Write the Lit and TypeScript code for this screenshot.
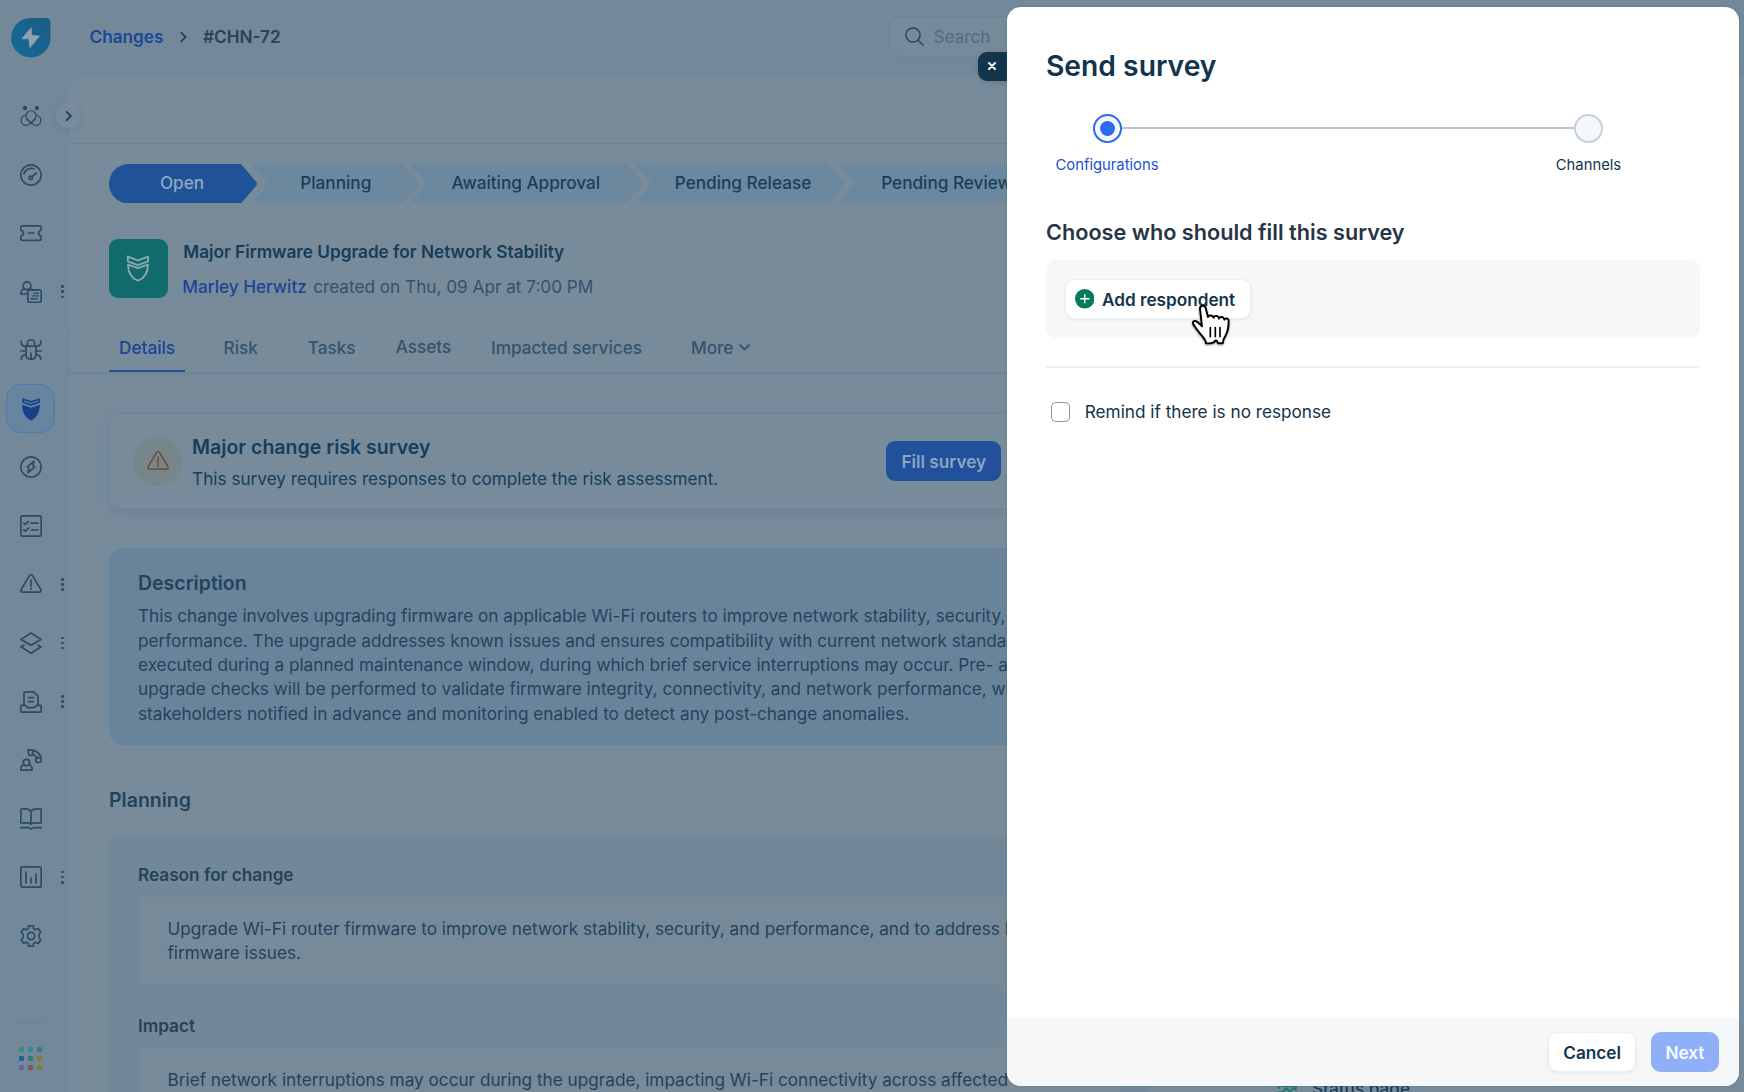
import { LitElement, html, css, svg, nothing } from "lit";
import { customElement } from "lit/decorators.js";
import { classMap } from "lit/directives/class-map.js";

const shield = svg`<path d="M3 2.6 L11 5.6 L19 2.6 V6.4 L11 9.3 L3 6.4 Z"/><path d="M3.2 9 L11 11.7 L18.8 9 C18.8 15 16 19.6 11 21.6 C6 19.6 3.2 15 3.2 9 Z"/>`;

const icons: Record<string, unknown> = {
  freddy: svg`<g stroke-width="1.3"><circle cx="5" cy="3" r="1.5" fill="currentColor"/><circle cx="16.9" cy="3" r="1.5" fill="currentColor"/>
    <path d="M11 18.3 L7.2 14.2 A5 5 0 1 1 14.8 14.2 Z"/>
    <path d="M6.3 10.2 C3 10.2 1.2 12.8 1.2 15.4 C1.2 18.4 3.4 20.4 6 20.4 C8 20.4 9.4 19.6 11 17.9 L14.8 14.2"/>
    <path d="M15.7 10.2 C19 10.2 20.8 12.8 20.8 15.4 C20.8 18.4 18.6 20.4 16 20.4 C14 20.4 12.6 19.6 11 17.9 L7.2 14.2"/></g>`,
  gauge: svg`<circle cx="11" cy="11" r="10.2"/><path d="M4 9.8 C5 5.8 9.5 3.2 14 4.8"/><circle cx="10.8" cy="13.8" r="1.7"/><path d="M12 12.6 L16.4 9"/>`,
  ticket: svg`<path d="M2.6 3.8 H19.4 Q21.2 3.8 21.2 5.4 V8 Q18.6 9 18.6 11 Q18.6 13.4 21.2 14.2 V16.8 Q21.2 18.4 19.4 18.4 H2.6 Q.8 18.4 .8 16.8 V14.2 Q3.4 13.4 3.4 11 Q3.4 9 .8 8 V5.4 Q.8 3.8 2.6 3.8 Z"/><path d="M8.2 11 H13.8"/>`,
  request: svg`<circle cx="7" cy="4.8" r="3.9"/><path d="M4.2 7.8 Q.8 9 .8 13 H7.4 M9.6 7.6 Q12.4 8.6 12.8 9.2"/><rect x="7.8" y="8.8" width="13.4" height="12.6" rx="2"/><path d="M14 12.2 H18.2 M12.6 14.9 H18.2 M11 17.7 H17.4" stroke-width="1.4"/>`,
  bug: svg`<path d="M7.4 7.2 V4.2 Q7.4 1 11 1 Q14.6 1 14.6 4.2 V7.2"/><path d="M6 7.2 H16 V15 Q16 20.4 11 20.4 Q6 20.4 6 15 Z M11 14 V20"/><path d="M1.2 2 V3.6 Q1.4 6.8 6 7.6 M20.8 2 V3.6 Q20.6 6.8 16 7.6 M.6 12 H6 M16 12 H21.4 M6.2 15.6 Q1.4 16 1.2 20.2 M15.8 15.6 Q20.6 16 20.8 20.2"/>`,
  release: svg`<circle cx="11" cy="11" r="10.2"/><path d="M13.9 5.4 L7.2 10.8 L9 12.2 L8 16.6 L14.8 11.2 L13 9.8 Z"/>`,
  tasks: svg`<rect x=".8" y=".8" width="20.4" height="20.4" rx="1.8"/><path d="M3.8 8.2 L5.4 9.4 L8.6 6.4 M3.8 15 L5.4 16.2 L8.6 13.2 M11.2 8.2 H18 M11.2 15 H18"/>`,
  alert: svg`<path d="M9.6 2.4 Q11 .6 12.4 2.4 L20.9 16.6 Q21.6 18.8 19.6 19.2 H2.4 Q.4 18.8 1.1 16.6 Z"/><path d="M11 7 V13 M11 15 V16.2"/>`,
  layers: svg`<path d="M11 1 L21 7.4 L11 13.2 L1 7.4 Z"/><path d="M4 13.2 L1 14.8 L11 21.2 L21 14.8 L18 13.2"/>`,
  inbox: svg`<path d="M4 14 V3 Q4 .8 6 .8 H13.6 L18 5 V14"/><path d="M.8 15.6 Q.8 14.4 2 14.4 H5.4 L7.6 16.6 H14.4 L16.6 14.4 H20 Q21.2 14.4 21.2 15.6 V20 Q21.2 21.2 20 21.2 H2 Q.8 21.2 .8 20 Z"/><path d="M8.4 6.6 H13.4 M8.4 10.6 H13.4"/>`,
  agent: svg`<circle cx="6.4" cy="13.6" r="3.2"/><path d="M3.4 16 Q.8 17 .8 19 V21.2 H12 V19 Q12 17 9.4 16"/><path d="M8 .8 Q18.6 .4 21.2 9 V13 L16.4 13.4 L15.6 9.4 L17.6 8.4 L12.8 5.4 L12.4 6.4 H9 Z M12.6 1 V5 M16 9.2 L21 8.8"/>`,
  book: svg`<path d="M11 3 Q8.6 .8 5.6 .8 H2.4 Q.8 .8 .8 2.4 V14.8 H7.6 Q10 14.8 11 16.4 Q12 14.8 14.4 14.8 H21.2 V2.4 Q21.2 .8 19.6 .8 H16.4 Q13.4 .8 11 3 Z V16"/><path d="M.4 19.6 H9 L11 21 L13 19.6 H21.6"/>`,
  chart: svg`<rect x=".8" y=".8" width="20.4" height="20.4" rx="2"/><path d="M6 6 V17 M11 12 V17 M16 8 V17"/>`,
  gear: svg`<circle cx="11" cy="11" r="3.6"/><path d="M8.6 .8 H13.4 V3.4 L15.6 4.8 L18.2 3.6 L20.9 7.4 L19.2 9 Q18.6 11 19.2 13 L20.9 14.6 L18.2 18.4 L15.6 17.2 L13.4 18.6 V21.2 H8.6 V18.6 L6.4 17.2 L3.8 18.4 L1.1 14.6 L2.8 13 Q3.4 11 2.8 9 L1.1 7.4 L3.8 3.6 L6.4 4.8 L8.6 3.4 Z"/>`,
};

const navRows: { icon: string; more?: boolean; active?: boolean }[] = [
  { icon: "freddy" }, { icon: "gauge" }, { icon: "ticket" }, { icon: "request", more: true }, { icon: "bug" },
  { icon: "change", active: true }, { icon: "release" }, { icon: "tasks" }, { icon: "alert", more: true },
  { icon: "layers", more: true }, { icon: "inbox", more: true }, { icon: "agent" }, { icon: "book" },
  { icon: "chart", more: true }, { icon: "gear" },
];

const appColours = ["#3a8b86", "#2f8aa8", "#3c7f6c", "#275f95", "#2a8070", "#827a3c", "#65649a", "#84525f", "#827a3c"];

@customElement("side-rail")
class SideRail extends LitElement {
  static styles = css`
    :host { display: flex; flex-direction: column; width: 70px; height: 1092px; color: #2b4c66; box-sizing: border-box; padding-top: 18px; flex: none; }
    .logo { width: 39.5px; height: 39.5px; margin-left: 11.3px; display: block; }
    nav { margin-top: 29.2px; display: flex; flex-direction: column; }
    .row { height: 58.57px; display: flex; align-items: center; padding-left: 6.4px; }
    .tile { width: 48.8px; height: 48.8px; border-radius: 15px; display: grid; place-items: center; box-sizing: border-box; border: 1.3px solid transparent; }
    .active .tile { background: #6784a0; border-color: #487cae; }
    svg { display: block; fill: none; stroke: currentColor; stroke-width: 1.7; stroke-linejoin: round; stroke-linecap: round; }
    .solid { color: #153f8a; }
    .more { display: flex; flex-direction: column; gap: 2.7px; margin-left: 6px; }
    .more i { width: 2.4px; height: 2.4px; border-radius: 50%; background: #2b4c66; }
    hr { border: 0; height: 1px; background: #6c8394; width: 29px; margin: 56.5px 0 0 16px; }
    .apps { display: grid; grid-template-columns: repeat(3, 5px); gap: 4.4px; margin: 24px 0 0 18.5px; }
    .apps i { width: 5px; height: 5px; border-radius: 1px; background: var(--c); }
  `;
  render() {
    return html`
      <svg class="logo" viewBox="0 0 39.5 39.5"><defs><linearGradient id="g" x1="0" y1="1" x2="1" y2="0"><stop offset="0" stop-color="#156a99"/><stop offset="1" stop-color="#1c5b86"/></linearGradient></defs>
        <path d="M19.7 0 H35 Q39.5 0 39.5 4.5 V19.7 A19.7 19.7 0 1 1 19.7 0 Z" fill="url(#g)" stroke="none"/>
        <path d="M20.2 9.8 L10.6 20.8 H17.8 L19 29.6 L28.6 18 L20.8 17.2 Z" fill="#8da3b4" stroke="#8da3b4" stroke-width=".6"/></svg>
      <nav>
        ${navRows.map((r) => html`<div class=${classMap({ row: true, active: !!r.active })}>
          <div class="tile">${r.icon === "change"
            ? html`<svg class="solid" width="22" height="24" viewBox="0 0 22 24"><path d="M3 2.2 L11 4.9 L19 2.2 V5.2 L11 7.9 L3 5.2 Z"/><path d="M2.2 7.8 L11 10.8 L19.8 7.8 C19.8 15 17 20.6 11 23.4 C5 20.6 2.2 15 2.2 7.8 Z" fill="currentColor" stroke="none"/></svg>`
            : html`<svg width="22" height="22" viewBox="0 0 22 22">${icons[r.icon]}</svg>`}</div>
          ${r.more ? html`<div class="more"><i></i><i></i><i></i></div>` : nothing}
        </div>`)}
      </nav>
      <hr />
      <div class="apps">${appColours.map((c) => html`<i style="--c:${c}"></i>`)}</div>
    `;
  }
}

@customElement("change-page")
class ChangePage extends LitElement {
  static styles = css`
    :host { display: flex; flex-direction: column; flex: 1; min-width: 0; height: 1092px; }
    svg { display: block; fill: none; stroke: currentColor; stroke-linejoin: round; stroke-linecap: round; flex: none; }
    .top { height: 75.5px; flex: none; display: flex; align-items: flex-start; }
    .crumbs { display: flex; align-items: center; height: 73px; padding-left: 19.5px; width: 799.5px; font-weight: 570; color: #25435b; }
    .crumbs .link { color: #1b469a; width: 90.5px; }
    .crumbs svg { margin-right: 16px; }
    .search { margin-top: 16px; width: 330px; height: 40.5px; box-sizing: border-box; border: 1px solid #6e8495; border-radius: 10px; background: #758a9a; display: flex; align-items: center; padding-left: 15px; gap: 9.5px; color: #2b4558; }
    .search span { color: #506d83; }
    .panel { flex: 1; display: flex; background: #778b9b; border-top-left-radius: 14px; min-height: 0; }
    .main { width: 1116px; flex: none; }
    .strip { height: 67px; border-bottom: 1.3px solid #6d8294; }
    .stages { display: flex; margin: 20px 0 0 39px; height: 39.4px; }
    .stage { position: relative; display: grid; place-items: center; color: #17405c; font-weight: 500; flex: none; box-sizing: border-box; }
    .stage svg { position: absolute; inset: 0; stroke: none; fill: #6c889e; }
    .stage span { position: relative; line-height: 22px; padding-bottom: 1.2px; }
    .stage.on { color: #8fa9bd; } .stage.on svg { fill: #205298; }
    .head { display: flex; margin: 36.3px 0 0 39px; gap: 15.8px; }
    .badge { width: 58.5px; height: 58.5px; border-radius: 9px; background: #116b6d; display: grid; place-items: center; color: #8aa7b0; box-sizing: border-box; }
    .title { font-weight: 600; color: #173d59; line-height: 24px; margin-top: 1px; }
    .by { margin-top: 10.7px; margin-left: -1px; line-height: 24px; color: #34526a; }
    .by b { font-weight: 500; color: #1b4594; margin-right: 1.5px; }
    .tabs { display: flex; margin-top: 30px; padding-left: 39px; height: 42.8px; border-bottom: 1px solid #6c8294; box-shadow: 0 1px 3px #6c829488; font-weight: 500; color: #34536b; }
    .tab { position: relative; line-height: 38px; white-space: nowrap; flex: none; font-weight: 450; }
    .tab.on { color: #1b4594; width: 65.5px; padding-left: 10px; border-bottom: 2.5px solid #21529b; font-weight: 500; }
    .tab.up { top: -1px; }
    .more { display: flex; gap: 6px; align-items: center; height: 38px; }
    .card { margin: 40.3px 0 0 39px; height: 96.5px; width: 1040px; box-sizing: border-box; border: 1px solid #6e8496; border-radius: 10px; box-shadow: 0 4px 12px #62798b77; display: flex; align-items: center; padding-left: 23.3px; }
    .warn { width: 48.8px; height: 48.8px; border-radius: 50%; background: #77868b; display: grid; place-items: center; color: #754f38; }
    .ct { margin-left: 10px; width: 694.2px; color: #173d59; padding-top: 2.3px; }
    .ct h3 { margin: 0; font-size: 19.55px; font-weight: 600; line-height: 27px; }
    .ct p { margin: 5.6px 0 0; line-height: 24px; }
    .fill { width: 115px; height: 39.5px; border-radius: 9px; background: #20519a; color: #8ba5c2; display: grid; place-items: center; font-weight: 600; }
    .desc { margin: 39px 0 0 39px; height: 197px; width: 1040px; box-sizing: border-box; background: #69839b; border: 1px solid #5d85a7; border-radius: 14px; padding: 20.8px 28px; color: #24435a; }
    .desc h3 { margin: 0; font-size: 19.5px; line-height: 27px; font-weight: 600; }
    .desc p, .field p { margin: 7px 0 0; line-height: 24.4px; white-space: nowrap; }
    .sec { margin: 41.3px 0 0 39px; font-size: 19.5px; line-height: 27px; font-weight: 600; color: #24435a; }
    .plan { margin: 19.8px 0 0 39px; width: 1040px; height: 400px; box-sizing: border-box; background: #728798; border-radius: 10px; padding: 29.3px 29px; color: #24435a; }
    .plan h4 { margin: 0; font-size: inherit; font-weight: 600; line-height: 24px; }
    .field { margin: 10px 0 29.5px; background: #768a9a; border-radius: 8px; padding: 20px 29.5px; height: 88px; box-sizing: border-box; }
    .plan .field p { margin: 0; }
    .aside { flex: 1; display: flex; align-items: flex-end; }
    .status { display: flex; align-items: center; gap: 15px; padding-left: 92px; height: 6.4px; color: #173d59; font-weight: 500; line-height: 21px; }
    .status svg { color: #23776f; }
  `;
  render() {
    const stages = [
      { t: "Open", x: 0, w: 148, dx: -1, first: true }, { t: "Planning", x: 141.5, w: 167.5, dx: 1.5 }, { t: "Awaiting Approval", x: 300.5, w: 232.5, dx: 0 },
      { t: "Pending Release", x: 526, w: 209, dx: 3.5 }, { t: "Pending Review", x: 728, w: 210, dx: 4.5 },
    ];
    return html`
      <div class="top">
        <div class="crumbs"><span class="link">Changes</span><svg width="7" height="12" viewBox="0 0 7 12" stroke-width="1.8"><path d="M1.2 1.6 L5.6 6 L1.2 10.4"/></svg><span>#CHN-72</span></div>
        <div class="search"><svg width="19" height="19" viewBox="0 0 19 19" stroke-width="1.5"><circle cx="8" cy="8" r="7.1"/><path d="M13.2 13.2 L18 18"/></svg><span>Search</span></div>
      </div>
      <div class="panel">
        <div class="main">
          <div class="strip"></div>
          <div class="stages">${stages.map((s, i) => {
            const prev = stages[i - 1];
            const gap = prev ? s.x - prev.x - prev.w : 0;
            const d = s.first
              ? `M19.7 0 H${s.w - 16} L${s.w - 1} 17.4 Q${s.w + 0.8} 19.7 ${s.w - 1} 22 L${s.w - 16} 39.4 H19.7 A19.7 19.7 0 0 1 19.7 0 Z`
              : `M0 0 H${s.w - 16.5} L${s.w - 1} 17.4 Q${s.w + 0.8} 19.7 ${s.w - 1} 22 L${s.w - 16.5} 39.4 H0 L15.4 22 Q17.2 19.7 15.4 17.4 Z`;
            return html`<div class=${classMap({ stage: true, on: !!s.first })} style="width:${s.w}px;margin-left:${gap}px;padding-left:${Math.max(0, s.dx * 2)}px;padding-right:${Math.max(0, -s.dx * 2)}px">
              <svg width=${s.w} height="39.4">${svg`<path d=${d}/>`}</svg><span>${s.t}</span></div>`;
          })}</div>
          <div class="head">
            <div class="badge"><svg width="28" height="31" viewBox="0 0 22 24" stroke-width="1.5">${shield}</svg></div>
            <div><div class="title">Major Firmware Upgrade for Network Stability</div>
              <div class="by"><b>Marley Herwitz</b> created on Thu, 09 Apr at 7:00 PM</div></div>
          </div>
          <div class="tabs">
            <div class="tab on">Details</div>
            <div class="tab" style="margin-left:39px">Risk</div>
            <div class="tab" style="margin-left:50px">Tasks</div>
            <div class="tab up" style="margin-left:40px">Assets</div>
            <div class="tab" style="margin-left:39.7px">Impacted services</div>
            <div class="tab more" style="margin-left:49px">More <svg width="11" height="7" viewBox="0 0 11 7" stroke-width="1.9"><path d="M1.2 1.2 L5.5 5.4 L9.8 1.2"/></svg></div>
          </div>
          <div class="card">
            <div class="warn"><svg width="22" height="22" viewBox="0 0 22 22" stroke-width="1.7">${icons.alert}</svg></div>
            <div class="ct"><h3>Major change risk survey</h3><p>This survey requires responses to complete the risk assessment.</p></div>
            <div class="fill">Fill survey</div>
          </div>
          <div class="desc"><h3>Description</h3><p>This change involves upgrading firmware on applicable Wi-Fi routers to improve network stability, security,<br />performance. The upgrade addresses known issues and ensures compatibility with current network standards,<br />executed during a planned maintenance window, during which brief service interruptions may occur. Pre- and<br />upgrade checks will be performed to validate firmware integrity, connectivity, and network performance, with<br />stakeholders notified in advance and monitoring enabled to detect any post-change anomalies.</p></div>
          <div class="sec">Planning</div>
          <div class="plan">
            <h4>Reason for change</h4>
            <div class="field"><p>Upgrade Wi-Fi router firmware to improve network stability, security, and performance, and to address known<br />firmware issues.</p></div>
            <h4>Impact</h4>
            <div class="field"><p>Brief network interruptions may occur during the upgrade, impacting Wi-Fi connectivity across affected</p></div>
          </div>
        </div>
        <div class="aside"><div class="status"><svg width="19" height="16" viewBox="0 0 19 16" stroke-width="2"><path d="M1 7 V5 H18 V7 M1 11 H5 L8 7 L12 11 L15 7 L18 9"/></svg><span>Status page</span></div></div>
      </div>
    `;
  }
}

@customElement("survey-drawer")
class SurveyDrawer extends LitElement {
  static styles = css`
    :host { display: flex; flex-direction: column; background: #fff; border-radius: 14px; box-shadow: 0 0 2px #4d677c88; overflow: hidden; color: #12344d; }
    .body { flex: 1; padding: 39.7px 39px 0; }
    h1 { margin: 0; font-size: 28.25px; line-height: 40px; font-weight: 600; }
    .steps { display: flex; align-items: flex-start; margin-top: 27.5px; padding-left: 10px; }
    .step { display: flex; flex-direction: column; align-items: center; font-size: 14.8px; line-height: 20px; gap: 12.6px; width: 102px; }
    .dot { width: 29px; height: 29px; box-sizing: border-box; border-radius: 50%; border: 2.6px solid #c5d0da; background: #f5f7f9; display: grid; place-items: center; }
    .now { color: #1a4fd6; }
    .now .dot { border-color: #2c6bf2; }
    .now i { width: 15px; height: 15px; border-radius: 50%; background: #2c6bf2; }
    .bar { height: 2px; background: #b9c6d1; width: 452.5px; margin: 13px -36.5px 0; flex: none; }
    h2 { margin: 40.3px 0 0; font-size: 21.66px; line-height: 32px; font-weight: 600; color: #273444; }
    .box { margin-top: 12.2px; height: 78px; background: #f5f7f9; border-radius: 10px; display: flex; align-items: center; padding-left: 18.8px; }
    .btn { height: 39.5px; box-sizing: border-box; border-radius: 9.5px; border: 1.2px solid #e9eef3; background: #fff; box-shadow: 0 1px 3px #12344d14; display: flex; align-items: center; justify-content: center; font-weight: 600; }
    .add { width: 186px; gap: 7.5px; justify-content: flex-start; padding: 0.6px 0 0 9.2px; }
    .line { margin-top: 28.2px; height: 2px; background: #eff2f5; }
    .check { display: flex; align-items: center; gap: 14.7px; margin: 32px 0 0 4.6px; line-height: 24px; }
    .check i { width: 19.5px; height: 19.5px; box-sizing: border-box; border: 1.3px solid #8796a8; border-radius: 5px; }
    .foot { height: 68.5px; background: #f5f7f9; display: flex; align-items: center; justify-content: flex-end; gap: 14.5px; padding-right: 19.5px; }
    .cancel { width: 88px; }
    .next { width: 68.5px; background: #8fb0f6; border-color: #8fb0f6; color: #f7faff; box-shadow: none; }
    svg { display: block; }
  `;
  render() {
    return html`
      <div class="body">
        <h1>Send survey</h1>
        <div class="steps">
          <div class="step now"><div class="dot"><i></i></div>Configurations</div>
          <div class="bar"></div>
          <div class="step"><div class="dot"></div>Channels</div>
        </div>
        <h2>Choose who should fill this survey</h2>
        <div class="box"><div class="btn add"><svg width="19.5" height="19.5" viewBox="0 0 19.5 19.5"><circle cx="9.75" cy="9.75" r="9.75" fill="#067a5c"/><path d="M9.75 5.2 V14.3 M5.2 9.75 H14.3" stroke="#fff" stroke-width="1.4"/></svg>Add respondent</div></div>
        <div class="line"></div>
        <div class="check"><i></i>Remind if there is no response</div>
      </div>
      <div class="foot"><div class="btn cancel">Cancel</div><div class="btn next">Next</div></div>
    `;
  }
}

@customElement("app-root")
class AppRoot extends LitElement {
  static styles = css`
    :host { display: flex; position: relative; width: 1744px; height: 1092px; overflow: hidden; background: #738898; font: 400 17.18px Inter, "Liberation Sans", sans-serif; }
    .expand { position: absolute; left: 56.3px; top: 103.3px; width: 24.5px; height: 24.5px; border-radius: 50%; background: #788c9c; box-shadow: 0 1px 5px #5c738566; display: grid; place-items: center; color: #24435a; }
    .close { position: absolute; left: 977.6px; top: 51.6px; width: 40px; height: 29.5px; background: #12344d; border-radius: 9px 0 0 9px; box-shadow: 0 1px 4px #3f5a6f66; }
    .close svg { margin: 10.7px 0 0 10.7px; }
    survey-drawer { position: absolute; left: 1007px; top: 6.6px; width: 731.7px; height: 1079.8px; box-sizing: border-box; }
    .hand { position: absolute; left: 1190px; top: 302.7px; }
    svg { display: block; fill: none; stroke-linecap: round; stroke-linejoin: round; }
  `;
  render() {
    return html`
      <side-rail></side-rail>
      <change-page></change-page>
      <div class="expand"><svg width="7" height="12" viewBox="0 0 7 12" stroke="currentColor" stroke-width="1.9"><path d="M1.6 1.8 L5.8 6 L1.6 10.2"/></svg></div>
      <div class="close"><svg width="8" height="8" viewBox="0 0 8 8" stroke="#fff" stroke-width="1.9"><path d="M1 1 L7 7 M7 1 L1 7"/></svg></div>
      <survey-drawer></survey-drawer>
      <svg class="hand" width="41.3" height="45.3" viewBox="120 98 124 136">
        <defs><filter id="s" x="-20%" y="-20%" width="140%" height="150%"><feDropShadow dx="0" dy="3" stdDeviation="2.5" flood-opacity=".4"/></filter></defs>
        <g filter="url(#s)"><path d="M150 116 C149 105 164 103 167 113 L174 140 C176 133 188 134 191 142 C193 134 205 135 207 145 C210 137 221 139 223 148 C228 141 237 145 236 153 C236 172 234 184 226 197 C220 206 219 212 218 219 L204 219 C202 210 198 208 194 213 C190 220 180 220 168 219 C168 208 160 202 153 193 C146 184 140 178 134 168 C126 158 128 153 134 152 C141 151 147 158 156 168 Z" fill="#fff" stroke="#000" stroke-width="5.8"/>
        <path d="M181 172 V199 M196 172 V199 M210 172 V199" stroke="#000" stroke-width="5"/></g>
      </svg>
    `;
  }
}
